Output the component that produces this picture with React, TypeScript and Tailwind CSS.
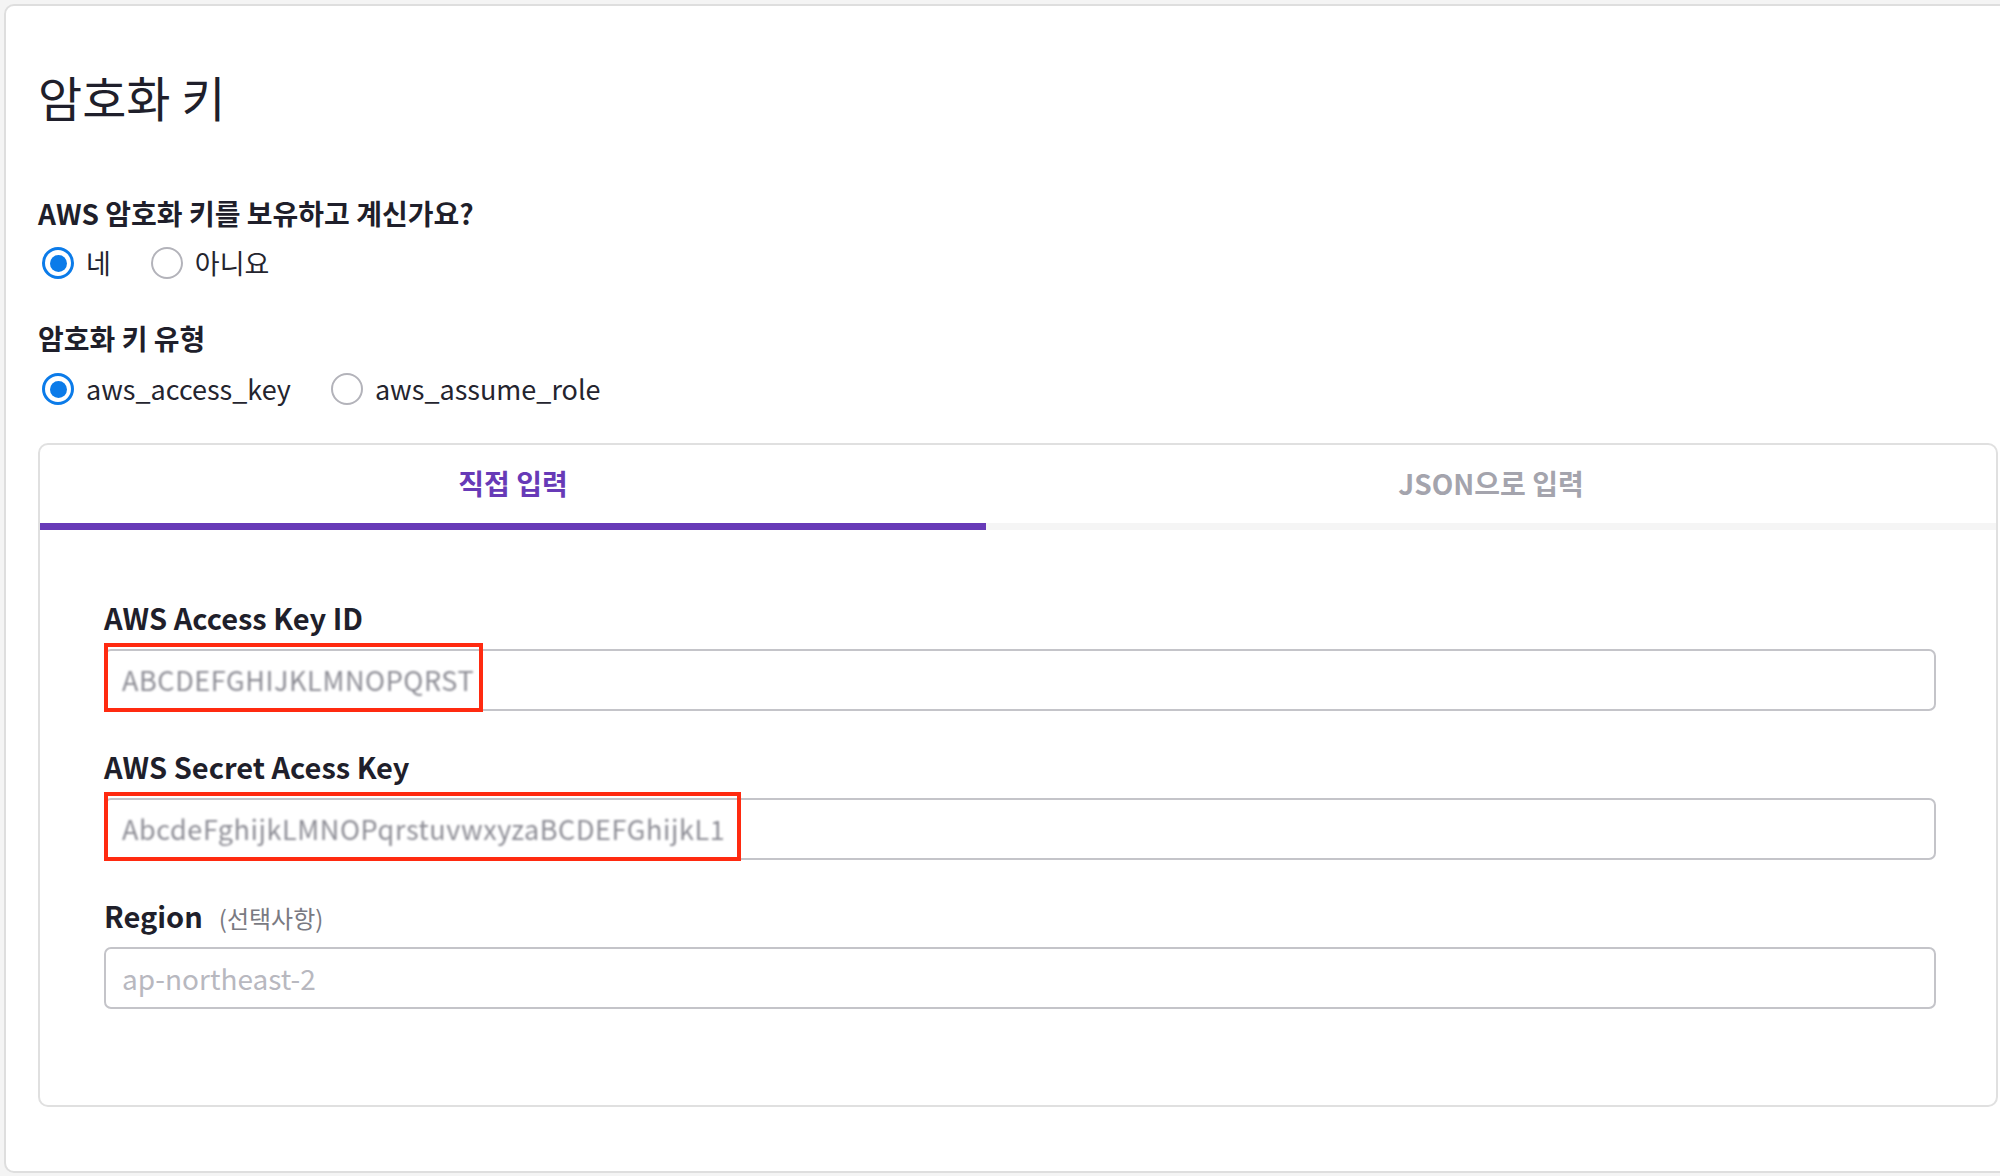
import { useState } from "react";

const font = { fontFamily: '"Noto Sans CJK KR", "Noto Sans", sans-serif' };

function Radio({ checked, label, onClick }: { checked: boolean; label: string; onClick: () => void }) {
  return (
    <button type="button" onClick={onClick} className="flex h-[36px] items-center gap-[12px]">
      {checked ? (
        <span className="flex h-[32px] w-[32px] items-center justify-center rounded-full border-[3px] border-[#0b7be9]">
          <span className="h-[17px] w-[17px] rounded-full bg-[#0b7be9]" />
        </span>
      ) : (
        <span className="h-[32px] w-[32px] rounded-full border-2 border-[#b3b3ba]" />
      )}
      <span className="text-[27px] leading-[36px] text-[#24242e]">{label}</span>
    </button>
  );
}

function Field({
  label,
  hint,
  value,
  placeholder,
  mark,
}: {
  label: string;
  hint?: string;
  value?: string;
  placeholder?: string;
  mark?: number;
}) {
  return (
    <div className="flex flex-col gap-[14px]">
      <div className="flex h-[36px] items-baseline gap-[16px] leading-[36px]">
        <span className="text-[29px] font-bold text-[#1f1f2b]">{label}</span>
        {hint && <span className="text-[24px] text-[#7a7a82]">{hint}</span>}
      </div>
      <div className="relative">
        {value ? (
          <div className="flex h-[62px] items-center overflow-hidden rounded-[7px] border-2 border-[#c4c4c9] px-[16px]">
            <span className="text-[27px] tracking-[0.6px] text-[#8d8d95] blur-[0.8px]">{value}</span>
          </div>
        ) : (
          <input
            placeholder={placeholder}
            className="h-[62px] w-full rounded-[7px] border-2 border-[#c4c4c9] px-[16px] text-[28px] outline-none placeholder:text-[#b8b8bf]"
          />
        )}
        {mark && (
          <div
            className="absolute -top-[6px] left-0 h-[69px] border-4 border-[#ff2a10]"
            style={{ width: mark }}
          />
        )}
      </div>
    </div>
  );
}

export default function App() {
  const [hasKey, setHasKey] = useState(true);
  const [keyType, setKeyType] = useState("aws_access_key");
  const [tab, setTab] = useState(0);

  return (
    <div className="h-[1176px] w-[2000px] overflow-hidden bg-[#f4f4f4] pl-[4px] pt-[4px]" style={font}>
      <div className="h-[1169px] w-[2100px] rounded-[10px] border-2 border-[#dedede] bg-white pl-[32px] pt-[62px]">
        <h1 className="text-[48px] leading-[56px] text-[#1f1f2b]">암호화 키</h1>

        <p className="mt-[71px] text-[28px] font-bold leading-[36px] text-[#1f1f2b]">AWS 암호화 키를 보유하고 계신가요?</p>
        <div className="mt-[14px] flex gap-[40px] pl-[4px]">
          <Radio checked={hasKey} label="네" onClick={() => setHasKey(true)} />
          <Radio checked={!hasKey} label="아니요" onClick={() => setHasKey(false)} />
        </div>

        <p className="mt-[39px] text-[28px] font-bold leading-[36px] text-[#1f1f2b]">암호화 키 유형</p>
        <div className="mt-[15px] flex gap-[40px] pl-[4px]">
          <Radio checked={keyType === "aws_access_key"} label="aws_access_key" onClick={() => setKeyType("aws_access_key")} />
          <Radio checked={keyType === "aws_assume_role"} label="aws_assume_role" onClick={() => setKeyType("aws_assume_role")} />
        </div>

        <div className="mt-[36px] h-[664px] w-[1960px] overflow-hidden rounded-[10px] border-2 border-[#e0e0e0]">
          <div className="flex">
            <button
              type="button"
              onClick={() => setTab(0)}
              className={`flex h-[85px] w-[946px] items-center justify-center border-b-[7px] pb-[2px] text-[28px] font-bold ${
                tab === 0 ? "border-[#673ab7] text-[#673ab7]" : "border-[#f5f5f5] text-[#a4a4ad]"
              }`}
            >
              직접 입력
            </button>
            <button
              type="button"
              onClick={() => setTab(1)}
              className={`flex h-[85px] flex-1 items-center justify-center border-b-[7px] pb-[2px] text-[28px] font-bold ${
                tab === 1 ? "border-[#673ab7] text-[#673ab7]" : "border-[#f5f5f5] text-[#a4a4ad]"
              }`}
            >
              JSON으로 입력
            </button>
          </div>

          <div className="flex flex-col gap-[37px] pl-[64px] pr-[60px] pt-[69px]">
            <Field label="AWS Access Key ID" value="ABCDEFGHIJKLMNOPQRST" mark={379} />
            <Field
              label="AWS Secret Acess Key"
              value="AbcdeFghijkLMNOPqrstuvwxyzaBCDEFGhijkL1"
              mark={637}
            />
            <Field label="Region" hint="(선택사항)" placeholder="ap-northeast-2" />
          </div>
        </div>
      </div>
    </div>
  );
}
